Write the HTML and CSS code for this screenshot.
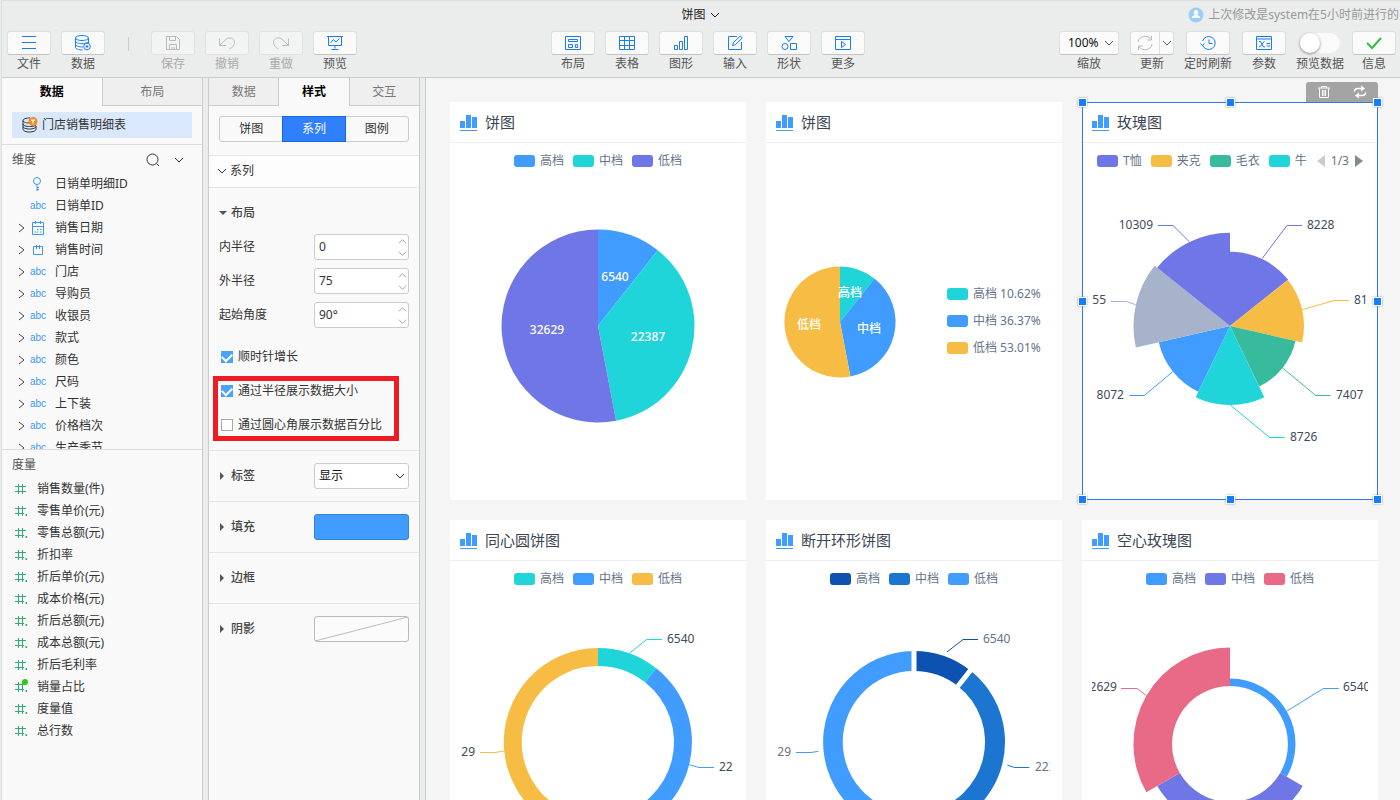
FILE: index.html
```html
<!DOCTYPE html>
<html lang="zh-CN">
<head>
<meta charset="utf-8">
<title>饼图</title>
<link rel="stylesheet" href="styles.css">
</head>
<body>
<svg class="defs" aria-hidden="true">
  <symbol id="chev-down" viewBox="0 0 10 10"><path d="M1 3l4 4 4-4"/></symbol>
  <symbol id="chev-up" viewBox="0 0 10 10"><path d="M1 7l4-4 4 4"/></symbol>
  <symbol id="chev-right" viewBox="0 0 8 10"><path d="M0 1l5 4-5 4"/></symbol>
  <symbol id="tri-right" viewBox="0 0 8 8"><path d="M1 0l4 4-4 4z" fill="currentColor" stroke="none"/></symbol>
  <symbol id="tri-down" viewBox="0 0 8 8"><path d="M0 2h8l-4 4z" fill="currentColor" stroke="none"/></symbol>
  <symbol id="hash" viewBox="0 0 13 12"><path d="M3.500 1v10M7.500 1v10M0 3.500h11M0 8.500h11"/></symbol>
  <symbol id="hash-dot" viewBox="0 0 13 12"><path d="M3.500 1v10M7.500 1v10M0 3.500h11M0 8.500h9"/><path d="M10.500 9h1.500v2h-1.500z" fill="currentColor" stroke="none"/></symbol>
  <symbol id="bars" viewBox="0 0 17 18"><path d="M0 8h5v7H0zM6 2h5v13H6zM12 4h5v11h-5zM0 17h17v1H0z" fill="#409cff" stroke="none"/></symbol>
</svg>
<div class="app">
  <header class="topbar">
    <div class="title-row">
      <span></span>
      <button class="doc-title" type="button">饼图<svg class="i10"><use href="#chev-down"/></svg></button>
      <p class="status"><svg class="avatar" viewBox="0 0 16 16"><circle cx="8" cy="8" r="7.500" fill="#9bcdf8" stroke="none"/><path d="M8 3a2.200 2.500 0 0 1 1.300 4.600c0 1.200 2.700 1 2.700 3.400H4c0-2.400 2.700-2.200 2.700-3.400A2.200 2.500 0 0 1 8 3z" fill="#fff" stroke="none"/></svg>上次修改是system在5小时前进行的</p>
    </div>
    <div class="tools">
      <div class="tool-group">
        <div class="tool"><button id="t1" type="button"><svg viewBox="0 0 16 16"><path d="M1 1.500h14M1 7.500h14M1 13.500h14"/></svg></button><label for="t1">文件</label></div>
        <div class="tool"><button id="t2" type="button"><svg viewBox="0 0 16 16"><ellipse cx="7" cy="3" rx="6.500" ry="2.500"/><path d="M.500 3v9.500c0 1.200 3 2.500 7 2.500M13.500 3v5M.500 6.200c0 1.400 3 2.500 6.500 2.500 3 0 6.500-1.100 6.500-2.500M.500 9.500C.500 11 4 12 8 12"/><circle cx="12" cy="11.500" r="3.300"/><path d="M12 10v3M10.500 11.500h3"/></svg></button><label for="t2">数据</label></div>
        <i class="tool-sep"></i>
        <div class="tool off"><button id="t3" type="button" disabled><svg viewBox="0 0 16 16"><path d="M1.500 1.500h10l3 3v10h-13zM4.500 1.500v4h6v-4M4.500 14.500v-5h7v5M7 12v2.500M9 12v2.500"/></svg></button><label for="t3">保存</label></div>
        <div class="tool off"><button id="t4" type="button" disabled><svg viewBox="0 0 16 16"><path d="M.500 3.500v7H7M.500 10.500L7 4.300c3.200-2.800 8.500-1.300 8.500 3 0 3-2 5-5 6.700"/></svg></button><label for="t4">撤销</label></div>
        <div class="tool off"><button id="t5" type="button" disabled><svg viewBox="0 0 16 16"><path d="M15.500 3.500v7H9M15.500 10.500L9 4.300C5.800 1.500.500 3 .500 7.300c0 3 2 5 5 6.700"/></svg></button><label for="t5">重做</label></div>
        <div class="tool"><button id="t6" type="button"><svg viewBox="0 0 16 16"><path d="M0 1.500h16M1.500 1.500v9h13v-9M8 10.500v3M4.500 14.500h7M3.500 8l3-3.500L9 7l3.500-3.500"/></svg></button><label for="t6">预览</label></div>
      </div>
      <div class="tool-group">
        <div class="tool"><button id="t7" type="button"><svg viewBox="0 0 16 16"><path d="M.500 1.500h15v13H.500zM3.500 4.500h9v2h-9zM3.500 9.500h4v3h-4zM10.500 9.500h2v3h-2z"/></svg></button><label for="t7">布局</label></div>
        <div class="tool"><button id="t8" type="button"><svg viewBox="0 0 16 16"><path d="M.500 1.500h15v13H.500zM.500 5.500h15M.500 10.500h15M5.500 1.500v13M10.500 1.500v13"/></svg></button><label for="t8">表格</label></div>
        <div class="tool"><button id="t9" type="button"><svg viewBox="0 0 16 16"><path d="M1.500 10.500h3v4h-3zM6.500 6.500h3v8h-3zM11.500 1.500h3v13h-3z"/></svg></button><label for="t9">图形</label></div>
        <div class="tool"><button id="t10" type="button"><svg viewBox="0 0 16 16"><path d="M10 1.500H1.500v13h13V7M5.500 10.500l1-3L13.300 1l2 2-7 6.800z"/></svg></button><label for="t10">输入</label></div>
        <div class="tool"><button id="t11" type="button"><svg viewBox="0 0 16 16"><path d="M4 1.500h8L8 6.500zM9.500 8.500h6v6h-6z"/><circle cx="4" cy="11.500" r="3"/></svg></button><label for="t11">形状</label></div>
        <div class="tool"><button id="t12" type="button"><svg viewBox="0 0 16 16"><path d="M.500 1.500h15v13H.500zM.500 4.500h15M6.500 6.500l4 3-4 3z"/></svg></button><label for="t12">更多</label></div>
      </div>
      <div class="tool-group right">
        <div class="tool"><div class="zoom-box"><select id="t13"><option>100%</option></select><svg class="i10"><use href="#chev-down"/></svg></div><label for="t13">缩放</label></div>
        <div class="tool"><div class="split"><button id="t14" class="dim" type="button"><svg viewBox="0 0 16 16"><path d="M1 7a7 6.500 0 0 1 13-2.500M15 9a7 6.500 0 0 1-13 2.500M14.500 1v4h-4M1.500 15v-4h4"/></svg></button><button type="button" aria-label="更新选项"><svg class="i10"><use href="#chev-down"/></svg></button></div><label for="t14">更新</label></div>
        <div class="tool"><button id="t15" type="button"><svg viewBox="0 0 16 16"><path d="M2.500 10a6.500 6.500 0 1 0 0-4M.500 8.500l2 2 2-2M9 4.500v4h3.500"/></svg></button><label for="t15">定时刷新</label></div>
        <div class="tool"><button id="t16" type="button"><svg viewBox="0 0 16 16"><path d="M.500 1.500h15v13H.500zM.500 4h15M3 6.500h1.500l3 5.500H9M8.500 6.500c-2 0-3 5.500-5.500 5.500M10.500 8.500H14M10.500 11H14"/></svg></button><label for="t16">参数</label></div>
        <div class="tool"><input id="t17" class="switch" type="checkbox" role="switch"><label for="t17">预览数据</label></div>
        <div class="tool ok"><button id="t18" type="button"><svg viewBox="0 0 16 16"><path d="M1 8l5 5L15 3"/></svg></button><label for="t18">信息</label></div>
      </div>
    </div>
  </header>

  <div class="workspace">
    <aside class="side">
      <nav class="tabs"><button class="on" type="button">数据</button><button type="button">布局</button></nav>
      <button class="source" type="button"><svg viewBox="0 0 16 16"><path d="M8 1C4 1 1 2 1 3.500S3.500 6 7 6M1 3.500V12c0 2 3 3 6.500 3S14 14 14 12V9M1 7c0 1.500 3 2.500 6.500 2.500C11 9.500 14 9 14 7.500M1 9.500C1 11 4 12 7.500 12s6.500-1 6.500-2.500"/><circle cx="11" cy="4.500" r="4.500" fill="#f78b1f" stroke="none"/><path d="M9 3h4l-2 2zM11 3v4" stroke="#fff" fill="#fff"/></svg>门店销售明细表</button>
      <section class="dims">
        <h3>维度<span class="head-actions"><button type="button" aria-label="搜索"><svg viewBox="0 0 14 14"><circle cx="6.500" cy="6.500" r="5.500"/><path d="M10.500 10.500l2.500 2.500"/></svg></button><button type="button" aria-label="展开"><svg class="i10"><use href="#chev-down"/></svg></button></span></h3>
        <ul>
          <li><i></i><svg viewBox="0 0 16 16"><circle cx="7" cy="5" r="3.500"/><path d="M7 8.500V15M7 11.500h2M7 13.500h2"/></svg>日销单明细ID</li>
          <li><i></i><em>abc</em>日销单ID</li>
          <li><svg class="arr"><use href="#chev-right"/></svg><svg viewBox="0 0 16 16"><path d="M2.500 2.500h11v12h-11zM2.500 6.500h11M5.500 1v3M10.500 1v3M7 9.500h1.500M10 9.500h1.500M4.500 12h1.500M7 12h1.500M10 12h1.500"/></svg>销售日期</li>
          <li><svg class="arr"><use href="#chev-right"/></svg><svg viewBox="0 0 16 16"><path d="M3.500 4.500h9v8h-9zM6.500 3v4M9.500 3v4"/></svg>销售时间</li>
          <li><svg class="arr"><use href="#chev-right"/></svg><em>abc</em>门店</li>
          <li><svg class="arr"><use href="#chev-right"/></svg><em>abc</em>导购员</li>
          <li><svg class="arr"><use href="#chev-right"/></svg><em>abc</em>收银员</li>
          <li><svg class="arr"><use href="#chev-right"/></svg><em>abc</em>款式</li>
          <li><svg class="arr"><use href="#chev-right"/></svg><em>abc</em>颜色</li>
          <li><svg class="arr"><use href="#chev-right"/></svg><em>abc</em>尺码</li>
          <li><svg class="arr"><use href="#chev-right"/></svg><em>abc</em>上下装</li>
          <li><svg class="arr"><use href="#chev-right"/></svg><em>abc</em>价格档次</li>
          <li><svg class="arr"><use href="#chev-right"/></svg><em>abc</em>生产季节</li>
        </ul>
      </section>
      <section class="measures">
        <h3>度量</h3>
        <ul>
          <li><svg><use href="#hash"/></svg>销售数量(件)</li>
          <li><svg><use href="#hash-dot"/></svg>零售单价(元)</li>
          <li><svg><use href="#hash-dot"/></svg>零售总额(元)</li>
          <li><svg><use href="#hash-dot"/></svg>折扣率</li>
          <li><svg><use href="#hash-dot"/></svg>折后单价(元)</li>
          <li><svg><use href="#hash-dot"/></svg>成本价格(元)</li>
          <li><svg><use href="#hash-dot"/></svg>折后总额(元)</li>
          <li><svg><use href="#hash-dot"/></svg>成本总额(元)</li>
          <li><svg><use href="#hash-dot"/></svg>折后毛利率</li>
          <li class="calc"><svg><use href="#hash-dot"/></svg>销量占比</li>
          <li><svg><use href="#hash-dot"/></svg>度量值</li>
          <li><svg><use href="#hash-dot"/></svg>总行数</li>
        </ul>
      </section>
    </aside>

    <aside class="panel">
      <nav class="tabs"><button type="button">数据</button><button class="on" type="button">样式</button><button type="button">交互</button></nav>
      <div class="segments"><button type="button">饼图</button><button class="on" type="button">系列</button><button type="button">图例</button></div>
      <h3 class="group-head"><svg class="i10"><use href="#chev-down"/></svg>系列</h3>
      <section class="fields">
        <h4><svg><use href="#tri-down"/></svg>布局</h4>
        <div class="field"><label for="f1">内半径</label><div class="spin"><input id="f1" type="text" value="0"><span><button type="button" aria-label="增加"><svg><use href="#chev-up"/></svg></button><button type="button" aria-label="减少"><svg><use href="#chev-down"/></svg></button></span></div></div>
        <div class="field"><label for="f2">外半径</label><div class="spin"><input id="f2" type="text" value="75"><span><button type="button" aria-label="增加"><svg><use href="#chev-up"/></svg></button><button type="button" aria-label="减少"><svg><use href="#chev-down"/></svg></button></span></div></div>
        <div class="field"><label for="f3">起始角度</label><div class="spin"><input id="f3" type="text" value="90°"><span><button type="button" aria-label="增加"><svg><use href="#chev-up"/></svg></button><button type="button" aria-label="减少"><svg><use href="#chev-down"/></svg></button></span></div></div>
        <div class="checks">
          <label class="check"><input type="checkbox" checked>顺时针增长</label>
          <div class="marked">
            <label class="check"><input type="checkbox" checked>通过半径展示数据大小</label>
            <label class="check"><input type="checkbox">通过圆心角展示数据百分比</label>
          </div>
        </div>
      </section>
      <section class="row"><h4><svg><use href="#tri-right"/></svg><label for="f4">标签</label></h4><div class="pick"><select id="f4"><option>显示</option></select><svg class="i10"><use href="#chev-down"/></svg></div></section>
      <section class="row"><h4><svg><use href="#tri-right"/></svg>填充</h4><button class="swatch-btn fill" type="button" aria-label="填充颜色"></button></section>
      <section class="row"><h4><svg><use href="#tri-right"/></svg>边框</h4></section>
      <section class="row"><h4><svg><use href="#tri-right"/></svg>阴影</h4><button class="swatch-btn" type="button" aria-label="阴影颜色"><svg viewBox="0 0 93 24" preserveAspectRatio="none"><path d="M0 24L93 0"/></svg></button></section>
    </aside>

    <main class="canvas">
      <article class="card">
        <h2><svg><use href="#bars"/></svg>饼图</h2>
        <ul class="legend"><li class="c-blue">高档</li><li class="c-cyan">中档</li><li class="c-purple">低档</li></ul>
        <svg class="chart" viewBox="-148 -147 296 321">
          <path class="c-blue" d="M0 0V-96.500A96.500 96.500 0 0 1 59.700-75.800z"/>
          <path class="c-cyan" d="M0 0L59.700-75.800A96.500 96.500 0 0 1 18.100 94.800z"/>
          <path class="c-purple" d="M0 0L18.100 94.800A96.500 96.500 0 1 1 0-96.500z"/>
          <g class="inside"><text x="17" y="-45">6540</text><text x="50" y="15">22387</text><text x="-51" y="8">32629</text></g>
        </svg>
      </article>

      <article class="card">
        <h2><svg><use href="#bars"/></svg>饼图</h2>
        <div class="side-by-side">
          <svg viewBox="-74 -74 148 148">
            <path class="c-cyan" d="M0 0V-55.500A55.500 55.500 0 0 1 34.400-43.600z"/>
            <path class="c-blue" d="M0 0L34.400-43.600A55.500 55.500 0 0 1 10.400 54.500z"/>
            <path class="c-yellow" d="M0 0L10.400 54.500A55.500 55.500 0 1 1 0-55.500z"/>
            <g class="inside"><text x="10" y="-25">高档</text><text x="29" y="11">中档</text><text x="-31" y="7">低档</text></g>
          </svg>
          <ul class="legend stacked"><li class="c-cyan">高档 10.62%</li><li class="c-blue">中档 36.37%</li><li class="c-yellow">低档 53.01%</li></ul>
        </div>
      </article>

      <article class="card selected">
        <h2><svg><use href="#bars"/></svg>玫瑰图</h2>
        <div class="legend-row">
          <ul class="legend"><li class="c-purple">T恤</li><li class="c-yellow">夹克</li><li class="c-green">毛衣</li><li class="c-cyan">牛</li></ul>
          <div class="pager"><button type="button" aria-label="上一页"><svg viewBox="0 0 8 12"><path d="M8 0v12L0 6z" fill="#ccc"/></svg></button>1/3<button type="button" aria-label="下一页"><svg viewBox="0 0 8 12"><path d="M0 0v12l8-6z" fill="#888"/></svg></button></div>
        </div>
        <svg class="chart" viewBox="-148 -147 296 321">
          <path class="c-purple" d="M0 0V-74.300A74.300 74.300 0 0 1 58.100-46.300z"/>
          <path class="c-yellow" d="M0 0L57.900-46.100A74 74 0 0 1 72.100 16.500z"/>
          <path class="c-green" d="M0 0L65.500 15A67.200 67.200 0 0 1 29.200 60.500z"/>
          <path class="c-cyan" d="M0 0L34.300 71.200A79 79 0 0 1-34.300 71.200z"/>
          <path class="c-blue" d="M0 0L-31.700 65.800A73 73 0 0 1-71.200 16.200z"/>
          <path class="c-grey" d="M0 0L-94.100 21.500A96.500 96.500 0 0 1-75.400-60.200z"/>
          <path class="c-purple" d="M0 0L-72.900-58.200A93.300 93.300 0 0 1 0-93.300z"/>
          <g class="leads">
            <path class="c-purple" d="M-72-100.500h15l16.300 16.200M32.300-67.700L57-100.500h15"/>
            <path class="c-yellow" d="M72.300-16.300L104-25.500h15"/>
            <path class="c-green" d="M52.700 42l33 27.500h15"/>
            <path class="c-cyan" d="M.300 79l39.400 32.500h15"/>
            <path class="c-blue" d="M-57.300 45.700l-28.400 23.800h-15"/>
            <path class="c-grey" d="M-94.300-21.300l-9-3.200h-16"/>
          </g>
          <g class="outside"><text x="77" y="-97">8228</text><text x="124" y="-22">81</text><text x="106" y="73">7407</text><text x="60" y="115">8726</text></g>
          <g class="outside end"><text x="-77" y="-97">10309</text><text x="-124" y="-22">55</text><text x="-106" y="73">8072</text></g>
        </svg>
        <div class="card-tools">
          <button type="button" aria-label="删除"><svg viewBox="0 0 14 14"><path d="M1 3h12M4.500 3V1.500h5V3M2.500 3.500v9h9v-9M5.500 5v6M7 5v6M8.500 5v6"/></svg></button>
          <button type="button" aria-label="切换"><svg viewBox="0 0 14 14"><path d="M1.500 6.500c0-2 1-3 3-3H9M12.500 7.500c0 2-1 3-3 3H5" stroke-width="1.500"/><path d="M8 .500l4 3-4 3zM6 7.500l-4 3 4 3z" fill="currentColor" stroke="none"/></svg></button>
        </div>
        <i class="h tl"></i><i class="h tc"></i><i class="h tr"></i><i class="h ml"></i><i class="h mr"></i><i class="h bl"></i><i class="h bc"></i><i class="h br"></i>
      </article>

      <article class="card">
        <h2><svg><use href="#bars"/></svg>同心圆饼图</h2>
        <ul class="legend"><li class="c-cyan">高档</li><li class="c-blue">中档</li><li class="c-yellow">低档</li></ul>
        <svg class="chart" viewBox="-148 -147 296 321">
          <g transform="translate(0 -2)">
            <path class="c-cyan" d="M0-94A94 94 0 0 1 58.200-73.800L47.100-59.700A76 76 0 0 0 0-76z"/>
            <path class="c-blue" d="M58.200-73.800A94 94 0 0 1 17.600 92.300L14.300 74.600A76 76 0 0 0 47.100-59.700z"/>
            <path class="c-yellow" d="M17.600 92.300A94 94 0 1 1 0-94V-76A76 76 0 1 0 14.300 74.600z"/>
          </g>
          <g class="leads">
            <path class="c-cyan" d="M31.300-90.700l17.400-13.800H64"/>
            <path class="c-blue" d="M91.300 20.700l9.700 2.800h15"/>
            <path class="c-yellow" d="M-94 7l-9 1.500h-15"/>
          </g>
          <g class="outside"><text x="69" y="-101">6540</text><text x="121" y="27">22</text></g>
          <g class="outside end"><text x="-123" y="12">29</text></g>
        </svg>
      </article>

      <article class="card">
        <h2><svg><use href="#bars"/></svg>断开环形饼图</h2>
        <ul class="legend"><li class="c-navy">高档</li><li class="c-royal">中档</li><li class="c-blue">低档</li></ul>
        <svg class="chart" viewBox="-148 -147 296 321">
          <clipPath id="clip-ring"><rect x="-136" y="-147" width="272" height="321"/></clipPath>
          <g transform="translate(0 -2)">
            <path class="c-navy" d="M0-91A91 91 0 0 1 56.300-71.500L44-55.800A71 71 0 0 0 0-71z"/>
            <path class="c-royal" d="M56.300-71.500A91 91 0 0 1 17.100 89.400L13.300 69.700A71 71 0 0 0 44-55.800z"/>
            <path class="c-blue" d="M17.100 89.400A91 91 0 1 1 0-91V-71A71 71 0 1 0 13.300 69.700z"/>
            <path class="gaps" d="M0-69V-95M42.700-54.200L58.800-74.600M13 67.800L17.800 93.300"/>
          </g>
          <g class="leads">
            <path class="c-navy" d="M33-92l16-12.500h15"/>
            <path class="c-royal" d="M93.300 21l7 2.500h15"/>
            <path class="c-blue" d="M-95.600 7.300l-7.400 1.200h-15"/>
          </g>
          <g class="outside soft" clip-path="url(#clip-ring)"><text x="69" y="-101">6540</text><text x="121" y="27">223</text></g>
          <g class="outside soft end"><text x="-123" y="12">29</text></g>
        </svg>
      </article>

      <article class="card">
        <h2><svg><use href="#bars"/></svg>空心玫瑰图</h2>
        <ul class="legend"><li class="c-blue">高档</li><li class="c-purple">中档</li><li class="c-pink">低档</li></ul>
        <svg class="chart" viewBox="-148 -147 296 321">
          <clipPath id="clip-rose"><rect x="-138" y="-147" width="276" height="321"/></clipPath>
          <path class="c-blue" d="M0-65.500A65.500 65.500 0 0 1 56.700 32.800L50.200 29A58 58 0 0 0 0-58z"/>
          <path class="c-purple" d="M72.700 42A84 84 0 0 1-72.700 42L-50.200 29A58 58 0 0 0 50.200 29z"/>
          <path class="c-pink" d="M-83.600 48.300A96.500 96.500 0 0 1 0-96.500V-58A58 58 0 0 0-50.200 29z"/>
          <g class="leads">
            <path class="c-blue" d="M57-33l36.300-22.500h15.500"/>
            <path class="c-pink" d="M-83.500-48.300l-9.400-7.200h-16"/>
          </g>
          <g class="outside" clip-path="url(#clip-rose)"><text x="113" y="-53">6540</text></g>
          <g class="outside end" clip-path="url(#clip-rose)"><text x="-113" y="-53">2629</text></g>
        </svg>
      </article>
    </main>
  </div>
</div>
</body>
</html>
```

FILE: styles.css
```css
* { box-sizing: border-box; }
body, h2, h3, h4, p, ul { margin: 0; padding: 0; }
ul { list-style: none; }
i, em { font-style: normal; }
body {
  font: 12px/16px "Noto Sans", "Noto Sans CJK SC", sans-serif;
  color: #333;
  background: #ebecec;
  overflow: hidden;
}
button, input, select { font: inherit; color: inherit; margin: 0; }
button { border: 0; background: none; padding: 0; display: flex; align-items: center; justify-content: center; }
h2, h3, h4 { font-weight: 400; }
svg { fill: none; stroke: currentColor; stroke-width: 1; flex: none; display: block; }
.defs { position: absolute; width: 0; height: 0; }
.i10 { width: 10px; height: 10px; }

.app {
  height: 100vh;
  margin-left: 1px;
  border-left: 1px solid #dcdcdc;
  border-top: 1px solid #dedede;
  display: flex;
  flex-direction: column;
}

/* top bar */
.topbar { height: 77px; flex: none; border-bottom: 1px solid #ccc; background: #ebecec; }
.title-row { display: grid; grid-template-columns: 1fr auto 1fr; align-items: center; height: 28px; padding-right: 1px; }
.doc-title { gap: 4px; color: #222; }
.status { display: flex; align-items: center; justify-content: flex-end; gap: 4px; color: #999; }
.avatar { width: 16px; height: 16px; }
.tools { display: flex; justify-content: space-between; padding-top: 2px; }
.tool-group { display: flex; }
.tool { width: 54px; display: flex; flex-direction: column; align-items: center; gap: 1px; color: #1a7cf5; white-space: nowrap; }
.tool > label { color: #555; }
.tool > button, .split, .zoom-box {
  width: 44px;
  height: 24px;
  background: #fafafa;
  border: 1px solid #dedede;
  border-bottom-color: #c4c4c4;
  border-radius: 3px;
}
.tool > button svg, .split .dim svg { width: 16px; height: 16px; }
.tool.off { color: #bbb; }
.tool.off > label { color: #aaa; }
.tool.off > button { background: #f2f3f3; border-color: #e0e1e1; }
.tool.ok { color: #2fbf4b; }
.tool.ok svg { stroke-width: 2; }
.tool-sep { width: 36px; height: 14px; margin-top: 6px; background: linear-gradient(#ccc, #ccc) center / 1px 14px no-repeat; }
.right .tool { width: 56px; }
.right .tool:first-child { width: 70px; }
.right .tool:last-child { width: 52px; }
.right .tool > .zoom-box { width: 60px; position: relative; color: #555; }
.zoom-box select, .pick select { appearance: none; width: 100%; height: 100%; border: 0; background: none; padding: 0 14px 0 8px; color: #111; }
.zoom-box svg, .pick svg { position: absolute; right: 4px; top: 50%; margin-top: -5px; pointer-events: none; }
.split { display: flex; color: #666; }
.split button { flex: 1; }
.split .dim { flex: 0 0 29px; color: #bbb; border-right: 1px solid #dedede; }
.switch { appearance: none; width: 40px; height: 20px; margin: 2px 0; border-radius: 10px; background: #fafafa; display: flex; }
.switch::before { content: ""; width: 20px; height: 20px; border-radius: 50%; background: #fff; box-shadow: 0 1px 3px #888; }
.switch:checked { justify-content: flex-end; background: #409cff; }

/* side columns */
.workspace { flex: 1; min-height: 0; display: flex; gap: 5px; }
.side, .panel { flex: none; background: #f9f9f9; border-right: 1px solid #ccc; display: flex; flex-direction: column; }
.side { width: 201px; }
.panel { width: 212px; border-left: 1px solid #ccc; }
.tabs { display: flex; height: 28px; flex: none; }
.tabs button { flex: 1; background: #efefef; color: #777; border-bottom: 1px solid #ccc; }
.tabs .on { background: #f9f9f9; color: #000; font-weight: 700; border-bottom: 0; }
.tabs .on + button { border-left: 1px solid #ccc; }
.tabs button:has(+ .on) { border-right: 1px solid #ccc; }
.source { flex: none; height: 26px; margin: 6px 10px; padding-left: 10px; gap: 4px; justify-content: flex-start; background: #d9e9fb; }
.source svg { width: 16px; height: 16px; }
.dims, .measures { border-top: 1px solid #ddd; overflow: hidden; min-height: 0; }
.dims { flex: 305 1 0; }
.measures { flex: 351 1 0; }
.side h3 { display: flex; justify-content: space-between; align-items: center; height: 28px; padding: 2px 18px 0 10px; color: #555; font-size: 12px; line-height: 16px; }
.head-actions { display: flex; align-items: center; gap: 14px; color: #333; }
.head-actions svg { width: 14px; height: 14px; }
.head-actions .i10 { width: 10px; height: 10px; }
.side li { display: grid; align-items: center; height: 22px; }
.dims li { grid-template-columns: 11px 25px auto; padding-left: 17px; }
.dims li > svg { width: 16px; height: 16px; color: #3e97f7; }
.dims li > .arr { width: 8px; height: 10px; color: #444; }
.dims em { color: #3e97f7; font-family: "Liberation Sans", sans-serif; font-size: 10px; }
.measures li { grid-template-columns: 22px auto; padding-left: 13px; position: relative; }
.measures li svg { width: 13px; height: 12px; color: #2fae74; }
.calc::before { content: ""; position: absolute; left: 20px; top: 3px; width: 6px; height: 6px; border-radius: 50%; background: #2ccb10; }

/* style panel */
.segments { display: flex; height: 26px; margin: 10px 10px 13px; flex: none; border: 1px solid #ccc; border-radius: 3px; }
.segments button { flex: 1; }
.segments .on { background: #3080fe; color: #fff; outline: 1px solid #1568e0; }
.group-head { display: flex; align-items: center; gap: 3px; height: 33px; flex: none; padding: 0 0 2px 8px; background: #fdfdfd; border: solid #e4e4e4; border-width: 1px 0; font-size: 12px; }
.fields { padding: 8px 10px; }
.panel h4 { display: flex; align-items: center; gap: 4px; height: 34px; color: #444; font-size: 12px; font-weight: 500; }
.panel h4 svg { width: 8px; height: 8px; color: #555; }
.field { display: flex; align-items: center; justify-content: space-between; height: 34px; }
.spin, .pick, .swatch-btn { width: 95px; height: 26px; border: 1px solid #ccc; border-radius: 3px; background: #fff; }
.spin { display: flex; }
.spin input { border: 0; padding: 0 0 0 4px; width: 70px; flex: 1; background: none; min-width: 0; }
.spin span { display: flex; flex-direction: column; width: 12px; color: #999; }
.spin button { flex: 1; }
.spin svg { width: 9px; height: 9px; }
.checks { margin-top: 8px; }
.check { display: flex; align-items: center; height: 34px; gap: 5px; padding-left: 2px; white-space: nowrap; }
.check input { appearance: none; width: 12px; height: 12px; border: 1px solid #aaa; background: #fff; display: flex; justify-content: center; }
.check input:checked { background: #4aa3fb; border-color: #4aa3fb; }
.check input:checked::before { content: ""; width: 8px; height: 5px; margin-top: 1px; flex: none; border: solid #fff; border-width: 0 0 2px 2px; transform: rotate(-45deg); }
.marked { position: relative; }
.marked::after { content: ""; position: absolute; inset: 2px 10px 1px -6px; border: 5px solid #ed1c24; pointer-events: none; }
.row { display: flex; align-items: center; justify-content: space-between; height: 51px; flex: none; padding: 0 10px; border-top: 1px solid #e4e4e4; }
.pick { position: relative; }
.pick select { padding-left: 4px; }
.pick svg { right: 3px; }
.swatch-btn { background: #fbfbfb; border-color: #bbb; }
.swatch-btn svg { width: 100%; height: 100%; color: #bbb; }
.swatch-btn.fill { background: #409cff; border-color: #3183dc; }

/* dashboard */
.canvas {
  flex: 1;
  min-width: 0;
  overflow: hidden;
  padding: 24px 22px 24px 24px;
  border-left: 1px solid #ccc;
  background: #f5f5f5;
  display: grid;
  grid-template-columns: repeat(3, minmax(0, 1fr));
  grid-auto-rows: 398px;
  gap: 20px;
}
.card { background: #fff; display: flex; flex-direction: column; position: relative; }
.card h2 { display: flex; align-items: center; gap: 8px; height: 41px; flex: none; padding: 0 10px; border-bottom: 1px solid #ececf2; font-size: 15px; line-height: 20px; color: #3a4654; }
.card h2 svg { width: 17px; height: 18px; }
.legend { display: flex; justify-content: center; align-items: center; gap: 9px; height: 36px; flex: none; color: #64748a; }
.legend li { display: flex; align-items: center; gap: 5px; fill: none; white-space: nowrap; }
.legend li::before { content: ""; width: 21px; height: 12px; border-radius: 3px; background: var(--c); }
.legend-row { display: flex; justify-content: center; gap: 10px; }
.pager { display: flex; align-items: center; gap: 6px; color: #64748a; }
.pager svg { width: 8px; height: 12px; stroke: none; }
.side-by-side { flex: 1; display: flex; align-items: center; }
.side-by-side > svg { width: 50%; }
.stacked { flex-direction: column; gap: 0; height: auto; margin-left: 33px; padding-bottom: 2px; }
.stacked li { height: 27px; }
.chart { flex: 1; width: 100%; min-height: 0; }
.c-blue { --c: #409cff; }
.c-cyan { --c: #1fd5d9; }
.c-purple { --c: #6e77e5; }
.c-yellow { --c: #f7bc43; }
.c-green { --c: #38bb9c; }
.c-grey { --c: #a7b2cb; }
.c-navy { --c: #0d52b0; }
.c-royal { --c: #1d75d2; }
.c-pink { --c: #e86a87; }
path[class^="c-"] { fill: var(--c); stroke: none; }
.leads path[class^="c-"] { fill: none; stroke: var(--c); }
.gaps { stroke: #fff; stroke-width: 5; }
text { stroke: none; font-size: 12px; }
.inside { fill: #fff; text-anchor: middle; font-weight: 500; }
.outside { fill: #3f4b5a; }
.outside.soft { fill: #64748a; }
.end { text-anchor: end; }

/* selection frame */
.selected { outline: 1px solid #2d7ae8; outline-offset: -1px; }
.card-tools { position: absolute; right: 0; top: -20px; width: 72px; height: 20px; display: flex; background: #a4a4a4; border-radius: 3px 3px 0 0; color: #fff; }
.card-tools button { flex: 1; }
.card-tools svg { width: 14px; height: 14px; }
.h { position: absolute; width: 9px; height: 9px; margin: -4px; background: #147eff; border: 1px solid #fff; box-shadow: 0 0 2px #999; }
.tl, .tc, .tr { top: 0; }
.ml, .mr { top: 50%; }
.bl, .bc, .br { bottom: 0; }
.tl, .ml, .bl { left: 0; }
.tc, .bc { left: 50%; }
.tr, .mr, .br { right: 0; }
```
